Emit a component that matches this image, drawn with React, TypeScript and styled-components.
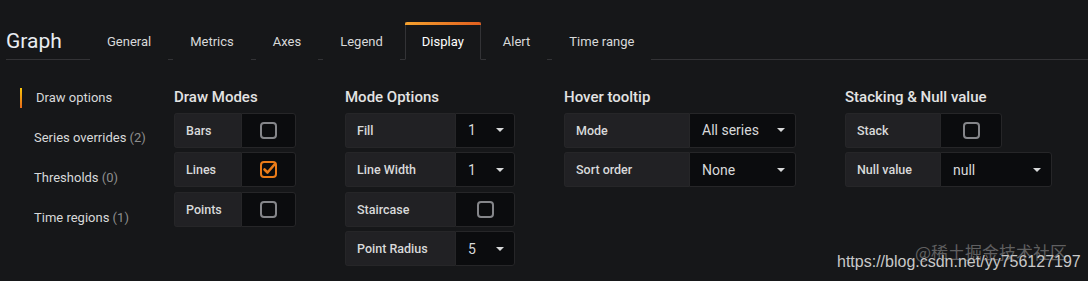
import React from 'react';
import styled, { createGlobalStyle } from 'styled-components';

const GlobalStyle = createGlobalStyle`
  html, body {
    margin: 0;
    padding: 0;
    background: #161719;
  }
  body {
    font-family: Roboto, "Noto Sans", "Liberation Sans", sans-serif;
    color: #d8d9da;
  }
`;

type Field =
  | { label: string; kind: 'check'; checked?: boolean }
  | { label: string; kind: 'select'; value: string };

type Section = {
  title: string;
  width: number;
  labelWidth: number;
  valueWidth: number;
  fields: Field[];
  wideSelect?: number;
};

const navItems = [
  { name: 'Draw options', active: true },
  { name: 'Series overrides', count: 2 },
  { name: 'Thresholds', count: 0 },
  { name: 'Time regions', count: 1 }
];

const tabs = ['General', 'Metrics', 'Axes', 'Legend', 'Display', 'Alert', 'Time range'];

const sections: Section[] = [
  {
    title: 'Draw Modes',
    width: 122,
    labelWidth: 67,
    valueWidth: 55,
    fields: [
      { label: 'Bars', kind: 'check' },
      { label: 'Lines', kind: 'check', checked: true },
      { label: 'Points', kind: 'check' }
    ]
  },
  {
    title: 'Mode Options',
    width: 170,
    labelWidth: 110,
    valueWidth: 60,
    fields: [
      { label: 'Fill', kind: 'select', value: '1' },
      { label: 'Line Width', kind: 'select', value: '1' },
      { label: 'Staircase', kind: 'check' },
      { label: 'Point Radius', kind: 'select', value: '5' }
    ]
  },
  {
    title: 'Hover tooltip',
    width: 232,
    labelWidth: 125,
    valueWidth: 107,
    fields: [
      { label: 'Mode', kind: 'select', value: 'All series' },
      { label: 'Sort order', kind: 'select', value: 'None' }
    ]
  },
  {
    title: 'Stacking & Null value',
    width: 207,
    labelWidth: 95,
    valueWidth: 62,
    wideSelect: 112,
    fields: [
      { label: 'Stack', kind: 'check' },
      { label: 'Null value', kind: 'select', value: 'null' }
    ]
  }
];

const Checkbox: React.FC<{ checked?: boolean }> = ({ checked }) => (
  <svg width="17" height="17" viewBox="0 0 17 17">
    <rect
      x="1"
      y="1"
      width="15"
      height="15"
      rx="3"
      fill="none"
      stroke={checked ? '#eb7b18' : '#85868a'}
      strokeWidth="2"
    />
    {checked && (
      <path
        d="M4.5 8.5 L7.5 11.5 L14.5 3.5"
        fill="none"
        stroke="#eb7b18"
        strokeWidth="2.6"
        strokeLinecap="round"
        strokeLinejoin="round"
      />
    )}
  </svg>
);

const Caret = () => (
  <svg width="8" height="4" viewBox="0 0 8 4">
    <path d="M0 0 L8 0 L4 4 Z" fill="#d8d9da" />
  </svg>
);

const App: React.FC = () => (
  <Page>
    <GlobalStyle />
    <Header>
      <Title>Graph</Title>
      <Tabs>
        {tabs.map(t => (
          <Tab key={t} active={t === 'Display'}>
            {t}
          </Tab>
        ))}
      </Tabs>
    </Header>
    <Body>
      <Nav>
        {navItems.map(item => (
          <NavItem key={item.name} active={item.active}>
            {item.name}
            {item.count !== undefined && <Count> ({item.count})</Count>}
          </NavItem>
        ))}
      </Nav>
      {sections.map(section => (
        <Group key={section.title} style={{ width: section.width }}>
          <GroupTitle>{section.title}</GroupTitle>
          {section.fields.map(field => (
            <Row key={field.label}>
              <Label style={{ width: section.labelWidth }}>{field.label}</Label>
              {field.kind === 'check' ? (
                <CheckCell style={{ width: section.valueWidth }}>
                  <Checkbox checked={field.checked} />
                </CheckCell>
              ) : (
                <SelectCell style={{ width: section.wideSelect ?? section.valueWidth }}>
                  <span>{field.value}</span>
                  <Caret />
                </SelectCell>
              )}
            </Row>
          ))}
        </Group>
      ))}
    </Body>
    <Watermark>
      https://blog.csdn.net/yy756127197
      <WatermarkCn>@稀土掘金技术社区</WatermarkCn>
    </Watermark>
  </Page>
);

const Page = styled.div`
  position: relative;
  width: 1088px;
  height: 281px;
  background: #161719;
  overflow: hidden;
`;

const Header = styled.div`
  display: flex;
  align-items: flex-end;
  height: 59px;
  margin: 0 0 0 6px;
  border-bottom: 1px solid #333336;
`;

const Title = styled.div`
  font-size: 21px;
  color: #e9edf2;
  width: 84px;
  line-height: 24px;
  padding-bottom: 6px;
`;

const Tabs = styled.div`
  display: flex;
  gap: 5px;
  margin-bottom: -1px;
`;

const Tab = styled.div<{ active?: boolean }>`
  position: relative;
  height: 38px;
  padding: 2px 16px 0;
  display: flex;
  align-items: center;
  font-size: 13px;
  color: ${p => (p.active ? '#ffffff' : '#d8d9da')};
  box-sizing: border-box;
  border: 1px solid ${p => (p.active ? '#333336' : 'transparent')};
  border-top: none;
  border-bottom-color: ${p => (p.active ? '#161719' : 'transparent')};
  background: #161719;

  &::before {
    content: '';
    display: ${p => (p.active ? 'block' : 'none')};
    position: absolute;
    left: -1px;
    right: -1px;
    top: 0;
    height: 3px;
    border-radius: 2px 2px 0 0;
    background: linear-gradient(90deg, #f5a22e, #e15f1f);
  }
`;

const Body = styled.div`
  display: flex;
  gap: 49px;
  padding: 27px 0 0 20px;
`;

const Nav = styled.div`
  width: 105px;
  display: flex;
  flex-direction: column;
  gap: 20px;
`;

const NavItem = styled.div<{ active?: boolean }>`
  height: 20px;
  line-height: 20px;
  font-size: 13px;
  white-space: nowrap;
  color: #d8d9da;
  padding-left: 14px;
  border-left: 2px solid ${p => (p.active ? '#eb7b18' : 'transparent')};
  border-image: ${p =>
    p.active ? 'linear-gradient(180deg, #fbca0a, #e5651b) 1' : 'none'};
  margin-left: ${p => (p.active ? '0' : '-2px')};
  margin-top: ${p => (p.active ? '1px' : '0')};
`;

const Count = styled.span`
  color: #8e8e8e;
`;

const Group = styled.div`
  display: flex;
  flex-direction: column;
  gap: 4.5px;
`;

const GroupTitle = styled.div`
  font-size: 15px;
  font-weight: 500;
  color: #e3e3e3;
  height: 20px;
  line-height: 20px;
  margin-bottom: 1px;
  white-space: nowrap;
`;

const Row = styled.div`
  display: flex;
  height: 35px;
`;

const Label = styled.div`
  box-sizing: border-box;
  display: flex;
  align-items: center;
  padding-left: 11px;
  font-size: 12.5px;
  font-weight: 500;
  color: #d8d9da;
  background: #212124;
  border: 1px solid #262628;
  border-right: none;
  border-radius: 3px 0 0 3px;
  white-space: nowrap;
`;

const CheckCell = styled.div`
  box-sizing: border-box;
  display: flex;
  align-items: center;
  justify-content: center;
  background: #0b0c0e;
  border: 1px solid #262628;
  border-radius: 0 3px 3px 0;
`;

const SelectCell = styled.div`
  box-sizing: border-box;
  display: flex;
  align-items: center;
  justify-content: space-between;
  padding: 0 10px 0 12px;
  font-size: 14px;
  color: #d8d9da;
  background: #0b0c0e;
  border: 1px solid #262628;
  border-radius: 0 3px 3px 0;
  white-space: nowrap;
`;

const Watermark = styled.div`
  position: absolute;
  left: 837px;
  top: 252px;
  font-family: "Liberation Sans", Arial, sans-serif;
  font-size: 16px;
  line-height: 20px;
  color: #c9c9c9;
  white-space: nowrap;
`;

const WatermarkCn = styled.span`
  position: absolute;
  left: 78px;
  top: -10px;
  font-family: "Noto Sans CJK SC", sans-serif;
  font-size: 17px;
  color: rgba(170, 170, 170, 0.5);
`;

export default App;
